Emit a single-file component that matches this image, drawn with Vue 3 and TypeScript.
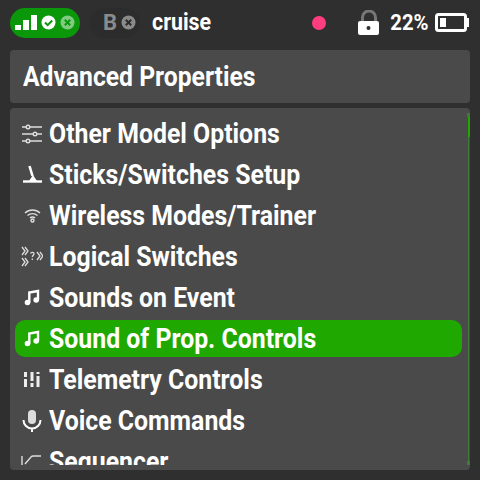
<template>
  <div class="screen">
    <header class="top">
      <div class="pill">
        <svg class="bars" width="22" height="15" viewBox="0 0 22 15">
          <rect x="0" y="10" width="6" height="5" fill="#fff" />
          <rect x="8" y="5" width="6" height="10" fill="#fff" />
          <rect x="16" y="0" width="6" height="15" fill="#fff" />
        </svg>
        <svg class="dot" width="15" height="15" viewBox="0 0 15 15">
          <circle cx="7.500" cy="7.500" r="7" fill="#fff" />
          <path d="M4 7.500l2.600 2.600 4.600-4.600" fill="none" stroke="#0a980a" stroke-width="2" />
        </svg>
        <svg class="dot" width="15" height="15" viewBox="0 0 15 15">
          <circle cx="7.500" cy="7.500" r="7" fill="#7fcb7f" />
          <path d="M4.800 4.800l5.400 5.400M10.200 4.800l-5.400 5.400" stroke="#0a980a" stroke-width="2" />
        </svg>
      </div>
      <div class="rx">
        <span class="rx-b">B</span>
        <svg width="15" height="15" viewBox="0 0 15 15">
          <circle cx="7.500" cy="7.500" r="7" fill="#8a8a8a" />
          <path d="M4.800 4.800l5.400 5.400M10.200 4.800l-5.400 5.400" stroke="#2c2c2c" stroke-width="2" />
        </svg>
      </div>
      <span class="model">cruise</span>
      <span class="rec"></span>
      <svg class="lock" width="22" height="25" viewBox="0 0 22 25">
        <path d="M4.500 11V7.500a6.500 6.500 0 0 1 13 0V11" fill="none" stroke="#777" stroke-width="3" />
        <rect x="0" y="11" width="21" height="14" rx="2" fill="#fff" />
        <circle cx="10.500" cy="18" r="2" fill="#2f2f2f" />
      </svg>
      <span class="pct">22%</span>
      <svg class="batt" width="35" height="19" viewBox="0 0 35 19">
        <rect x="1.500" y="1.500" width="29" height="16" rx="2" fill="none" stroke="#fff" stroke-width="3" />
        <rect x="31" y="5" width="3" height="9" fill="#fff" />
        <rect x="5" y="5" width="6" height="9" fill="#fff" />
      </svg>
    </header>

    <div class="card title"><span class="label title-label">Advanced Properties</span></div>

    <div class="card list">
      <div class="scroller">
        <div v-for="item in items" :key="item.label" class="row" :class="{ active: item.active }">
          <svg class="ic" width="22" height="22" viewBox="0 0 22 22" fill="none" stroke="#ddd" stroke-width="1.400">
            <template v-if="item.icon === 'options'">
              <path d="M1 4h20M1 11h20M1 18h20" stroke-width="1.600" />
              <circle cx="7" cy="4" r="1.800" fill="#4a4a4a" />
              <circle cx="14" cy="11" r="1.800" fill="#4a4a4a" />
              <circle cx="7" cy="18" r="1.800" fill="#4a4a4a" />
            </template>
            <template v-else-if="item.icon === 'stick'">
              <path d="M8.500 2l3 10" stroke="#fff" stroke-width="2.600" />
              <path d="M8 17l4-6 4 6z" fill="#fff" stroke="none" />
              <path d="M2 17.500h19" stroke="#fff" stroke-width="2.400" />
            </template>
            <template v-else-if="item.icon === 'wifi'">
              <path d="M4 8a11 11 0 0 1 15 0M6.500 10.500a7.500 7.500 0 0 1 10 0M9 13a3.500 3.500 0 0 1 5 0" />
              <circle cx="11.500" cy="15.500" r="1.500" />
            </template>
            <template v-else-if="item.icon === 'logic'">
              <path d="M1 1l3 4-3 4M4 1l3 4-3 4M1 12l3 4-3 4M4 12l3 4-3 4" stroke-width="1.300" />
              <path d="M16 6l3 4-3 4M19 6l3 4-3 4" stroke-width="1.300" />
              <path d="M9.500 7.500c.5-1.500 3.500-1.500 3.500.3 0 1.400-1.700 1.400-1.700 3.200M11.300 12.500v1.500" stroke-width="1.300" />
            </template>
            <template v-else-if="item.icon === 'note'">
              <path d="M8.300 15.500V5.500L17 4V13" stroke="#fff" stroke-width="2.400" />
              <circle cx="6.500" cy="15.500" r="2.800" fill="#fff" stroke="none" />
              <circle cx="15.200" cy="13" r="2.800" fill="#fff" stroke="none" />
            </template>
            <template v-else-if="item.icon === 'telemetry'">
              <path d="M4.500 3v5M4.500 10v8M11 3v9M11 14v4M17 3v2M17 7v11" stroke="#eee" stroke-width="3" />
            </template>
            <template v-else-if="item.icon === 'mic'">
              <rect x="7" y="0" width="8" height="14" rx="4" fill="#ddd" stroke="none" />
              <path d="M2.500 10a8.500 8.500 0 0 0 17 0M11 19v3" stroke="#fff" stroke-width="2" />
            </template>
            <template v-else>
              <path d="M1 5v17M4 13l6-7q1-1 2-1h8" stroke-width="1.400" />
            </template>
          </svg>
          <span class="label">{{ item.label }}</span>
        </div>
      </div>
      <div class="track"><div class="thumb"></div></div>
    </div>
  </div>
</template>

<script setup lang="ts">
type Item = { label: string; icon: string; active?: boolean }

const items: Item[] = [
  { label: 'Other Model Options', icon: 'options' },
  { label: 'Sticks/Switches Setup', icon: 'stick' },
  { label: 'Wireless Modes/Trainer', icon: 'wifi' },
  { label: 'Logical Switches', icon: 'logic' },
  { label: 'Sounds on Event', icon: 'note' },
  { label: 'Sound of Prop. Controls', icon: 'note', active: true },
  { label: 'Telemetry Controls', icon: 'telemetry' },
  { label: 'Voice Commands', icon: 'mic' },
  { label: 'Sequencer', icon: 'seq' },
]
</script>

<style>
html,
body {
  margin: 0;
  background: #2f2f2f;
}
</style>

<style scoped>
.screen {
  width: 480px;
  height: 480px;
  box-sizing: border-box;
  background: #2f2f2f;
  padding: 5px 10px 10px;
  display: flex;
  flex-direction: column;
  font-family: Roboto, sans-serif;
  color: #fff;
  overflow: hidden;
}

.top {
  height: 35px;
  display: flex;
  align-items: center;
  flex-shrink: 0;
  margin-bottom: 10px;
}

.pill {
  width: 70px;
  height: 30px;
  border-radius: 15px;
  background: #0a980a;
  display: flex;
  align-items: center;
  box-sizing: border-box;
  padding-left: 5px;
  gap: 4px;
}

.rx {
  margin-left: 10px;
  width: 50px;
  height: 30px;
  border-radius: 15px;
  background: #2c2c2c;
  box-sizing: border-box;
  padding-left: 13px;
  display: flex;
  align-items: center;
  gap: 4px;
}

.rx-b {
  font-size: 22px;
  font-weight: 700;
  color: #8a8a8a;
}

.model {
  margin-left: 12px;
  font-size: 23px;
  font-weight: 700;
  transform: scaleX(0.93);
  transform-origin: left;
}

.rec {
  margin-left: auto;
  width: 14px;
  height: 14px;
  border-radius: 50%;
  background: #ff3d7f;
  margin-right: 3px;
}

.lock {
  margin-left: 29px;
}

.pct {
  margin-left: 7px;
  font-size: 22px;
  font-weight: 700;
  transform: scaleX(0.92);
  transform-origin: right;
}

.batt {
  margin-left: 6px;
}

.card {
  background: #4a4a4a;
  border-radius: 4px;
}

.label {
  display: inline-block;
  white-space: nowrap;
  transform: scaleX(0.92);
  transform-origin: left;
}

.title-label {
  transform: scaleX(0.915);
}

.title {
  height: 53px;
  flex-shrink: 0;
  box-sizing: border-box;
  padding-left: 13px;
  display: flex;
  align-items: center;
  font-size: 27px;
  font-weight: 700;
  margin-bottom: 5px;
}

.list {
  flex: 1;
  min-height: 0;
  position: relative;
  padding: 7px 5px 5px;
  box-sizing: border-box;
}

.scroller {
  height: 100%;
  overflow: hidden;
  display: flex;
  flex-direction: column;
  gap: 4px;
}

.row {
  height: 37px;
  flex-shrink: 0;
  width: 447px;
  box-sizing: border-box;
  display: flex;
  align-items: center;
  padding-left: 6px;
  border-radius: 10px;
  font-size: 27px;
  font-weight: 700;
}

.row .ic {
  margin-right: 6px;
  flex-shrink: 0;
}

.row.active {
  background: #1fa800;
}

.track {
  position: absolute;
  right: 1px;
  top: 5px;
  bottom: 5px;
  width: 1px;
  background: #3f7a3a;
}

.track::before,
.track::after {
  content: '';
  position: absolute;
  left: -1px;
  width: 3px;
  height: 4px;
  background: #3f7a3a;
}

.track::before {
  top: 0;
}

.track::after {
  bottom: 0;
}

.thumb {
  position: absolute;
  top: 4px;
  left: 0;
  width: 2px;
  height: 20px;
  background: #1fa800;
}
</style>
